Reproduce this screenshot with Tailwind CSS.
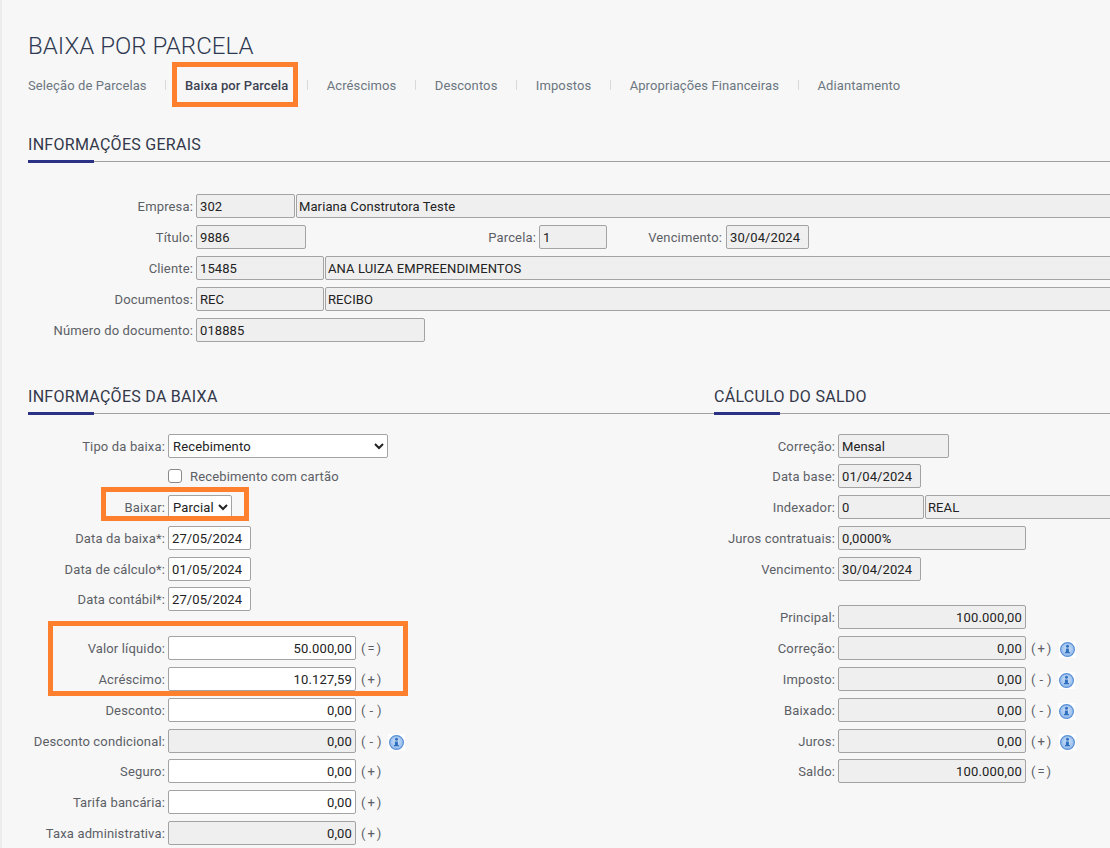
<!DOCTYPE html>
<html lang="pt-BR">
<head>
<meta charset="utf-8">
<script src="https://cdn.jsdelivr.net/npm/@tailwindcss/browser@4"></script>
<title>Baixa por Parcela</title>
</head>
<body class="m-0 bg-[#f7f7f7]">
<div class="relative w-[1110px] h-[848px] overflow-hidden bg-[#f7f7f7] font-['Roboto',sans-serif] text-[13px] leading-none text-[#5c6066] tracking-[0.15px] pl-[28px] border-l-2 border-l-[#ececec] box-border">
  <div class="-ml-[2px]">
    <h1 class="pt-[33px] h-[62px] text-[24px] leading-[26px] font-light tracking-[0.06px] text-[#2f3a52]">BAIXA POR PARCELA</h1>
    <nav class="flex items-center h-[46px] text-[#6b7680] tracking-[0.1px]">
      <span>Seleção de Parcelas</span>
      <span class="w-px h-[10px] bg-[#d9d9d9] mx-[18.7px]"></span>
      <span class="font-medium text-[#3d4252]">Baixa por Parcela</span>
      <span class="w-px h-[10px] bg-[#d9d9d9] mx-[18.7px]"></span>
      <span>Acréscimos</span>
      <span class="w-px h-[10px] bg-[#d9d9d9] mx-[18.7px]"></span>
      <span>Descontos</span>
      <span class="w-px h-[10px] bg-[#d9d9d9] mx-[18.7px]"></span>
      <span>Impostos</span>
      <span class="w-px h-[10px] bg-[#d9d9d9] mx-[18.7px]"></span>
      <span>Apropriações Financeiras</span>
      <span class="w-px h-[10px] bg-[#d9d9d9] mx-[18.7px]"></span>
      <span>Adiantamento</span>
    </nav>

    <section class="mt-[17px]">
      <h2 class="h-[37px] pt-[11px] text-[16px] leading-[18px] tracking-[0.28px] text-[#33384a] font-normal border-b border-b-[#a0a0a0] relative">INFORMAÇÕES GERAIS<span class="absolute left-0 -bottom-[2px] w-[66px] h-[3px] bg-[#2b3184]"></span></h2>
      <div class="mt-[28.5px] flex flex-col">
        <div class="flex items-center h-[31px]">
          <span class="w-[165px] shrink-0 text-right">Empresa:</span>
          <div class="ml-[3px] w-[99px] shrink-0 h-[24px] flex items-center px-[3px] bg-[#efefef] border border-[#a3a3a3] rounded-[2px] text-[#222] tracking-[0.1px]">302</div>
          <div class="ml-[1px] w-[900px] h-[24px] shrink-0 flex items-center px-[2px] bg-[#efefef] border border-[#a3a3a3] rounded-[2px] text-[#222] tracking-[0.1px]">Mariana Construtora Teste</div>
        </div>
        <div class="flex items-center h-[31px]">
          <span class="w-[165px] shrink-0 text-right">Título:</span>
          <div class="ml-[3px] w-[110px] shrink-0 h-[24px] flex items-center px-[3px] bg-[#efefef] border border-[#a3a3a3] rounded-[2px] text-[#222] tracking-[0.1px]">9886</div>
          <span class="w-[230px] shrink-0 text-right">Parcela:</span>
          <div class="ml-[3px] w-[68px] shrink-0 h-[24px] flex items-center px-[3px] bg-[#efefef] border border-[#a3a3a3] rounded-[2px] text-[#222] tracking-[0.1px]">1</div>
          <span class="w-[115px] shrink-0 text-right">Vencimento:</span>
          <div class="ml-[4px] w-[83px] shrink-0 h-[24px] flex items-center px-[3px] bg-[#efefef] border border-[#a3a3a3] rounded-[2px] text-[#222] tracking-[0.1px]">30/04/2024</div>
        </div>
        <div class="flex items-center h-[31px]">
          <span class="w-[165px] shrink-0 text-right">Cliente:</span>
          <div class="ml-[3px] w-[128px] shrink-0 h-[24px] flex items-center px-[3px] bg-[#efefef] border border-[#a3a3a3] rounded-[2px] text-[#222] tracking-[0.1px]">15485</div>
          <div class="ml-[1px] w-[900px] h-[24px] shrink-0 flex items-center px-[2px] bg-[#efefef] border border-[#a3a3a3] rounded-[2px] text-[#222] tracking-[0.1px]">ANA LUIZA EMPREENDIMENTOS</div>
        </div>
        <div class="flex items-center h-[31px]">
          <span class="w-[165px] shrink-0 text-right">Documentos:</span>
          <div class="ml-[3px] w-[128px] shrink-0 h-[24px] flex items-center px-[3px] bg-[#efefef] border border-[#a3a3a3] rounded-[2px] text-[#222] tracking-[0.1px]">REC</div>
          <div class="ml-[1px] w-[900px] h-[24px] shrink-0 flex items-center px-[2px] bg-[#efefef] border border-[#a3a3a3] rounded-[2px] text-[#222] tracking-[0.1px]">RECIBO</div>
        </div>
        <div class="flex items-center h-[31px]">
          <span class="w-[165px] shrink-0 text-right">Número do documento:</span>
          <div class="ml-[3px] w-[229px] shrink-0 h-[24px] flex items-center px-[3px] bg-[#efefef] border border-[#a3a3a3] rounded-[2px] text-[#222] tracking-[0.1px]">018885</div>
        </div>
      </div>
    </section>

    <div class="mt-[31.5px] grid grid-cols-[686px_396px]">
      <section>
        <h2 class="h-[37px] pt-[11px] text-[16px] leading-[18px] tracking-[0.28px] text-[#33384a] font-normal border-b border-b-[#a0a0a0] relative">INFORMAÇÕES DA BAIXA<span class="absolute left-0 -bottom-[2px] w-[66px] h-[3px] bg-[#2b3184]"></span></h2>
        <div class="mt-[16.225px] flex flex-col">
          <div class="flex items-center h-[30.75px]">
            <span class="w-[137px] shrink-0 text-right pt-[1px]">Tipo da baixa:</span>
            <select class="ml-[3px] w-[220px] h-[24px] pt-[1px] bg-white border border-[#a3a3a3] rounded-[2px] text-[13px] text-[#222]"><option>Recebimento</option></select>
          </div>
          <label class="flex items-center h-[30.75px] pl-[140px]">
            <input type="checkbox" class="w-[14px] h-[14px] m-0 appearance-none bg-white border border-[#8a8a8a] rounded-[3px]">
            <span class="ml-[8px]">Recebimento com cartão</span>
          </label>
          <div class="flex items-center h-[30.75px]">
            <span class="w-[137px] shrink-0 text-right">Baixar:</span>
            <select class="ml-[3px] w-[64px] h-[24px] bg-white border border-[#a3a3a3] rounded-[2px] text-[13px] text-[#222]"><option>Parcial</option></select>
          </div>
          <div class="flex items-center h-[30.75px]">
            <span class="w-[137px] shrink-0 text-right pt-[1px]">Data da baixa*:</span>
            <div class="ml-[3px] w-[83px] shrink-0 h-[24px] flex items-center px-[3px] pt-[1px] bg-white border border-[#a3a3a3] rounded-[2px] text-[#222] tracking-[0.1px]">27/05/2024</div>
          </div>
          <div class="flex items-center h-[30.75px]">
            <span class="w-[137px] shrink-0 text-right pt-[1px]">Data de cálculo*:</span>
            <div class="ml-[3px] w-[83px] shrink-0 h-[24px] flex items-center px-[3px] pt-[1px] bg-white border border-[#a3a3a3] rounded-[2px] text-[#222] tracking-[0.1px]">01/05/2024</div>
          </div>
          <div class="flex items-center h-[30.75px]">
            <span class="w-[137px] shrink-0 text-right pt-[1px]">Data contábil*:</span>
            <div class="ml-[3px] w-[83px] shrink-0 h-[24px] flex items-center px-[3px] pt-[1px] bg-white border border-[#a3a3a3] rounded-[2px] text-[#222] tracking-[0.1px]">27/05/2024</div>
          </div>
          <div class="flex items-center h-[30.75px] mt-[18.3px]">
            <span class="w-[137px] shrink-0 text-right">Valor líquido:</span>
            <div class="ml-[3px] w-[188px] shrink-0 h-[24px] flex items-center justify-end px-[3px] bg-white border border-[#a3a3a3] rounded-[2px] text-[#222] tracking-[0.15px]">50.000,00</div>
            <span class="ml-[5px] tracking-[2px]">(=)</span>
          </div>
          <div class="flex items-center h-[30.75px]">
            <span class="w-[137px] shrink-0 text-right">Acréscimo:</span>
            <div class="ml-[3px] w-[188px] shrink-0 h-[24px] flex items-center justify-end px-[3px] bg-white border border-[#a3a3a3] rounded-[2px] text-[#222] tracking-[0.15px]">10.127,59</div>
            <span class="ml-[5px] tracking-[2px]">(+)</span>
          </div>
          <div class="flex items-center h-[30.75px]">
            <span class="w-[137px] shrink-0 text-right pt-[1px]">Desconto:</span>
            <div class="ml-[3px] w-[188px] shrink-0 h-[24px] flex items-center justify-end px-[3px] pt-[1px] bg-white border border-[#a3a3a3] rounded-[2px] text-[#222] tracking-[0.15px]">0,00</div>
            <span class="ml-[5px] pt-[1px] tracking-[0.4px]">( - )</span>
          </div>
          <div class="flex items-center h-[30.75px]">
            <span class="w-[137px] shrink-0 text-right pt-[1px]">Desconto condicional:</span>
            <div class="ml-[3px] w-[188px] shrink-0 h-[24px] flex items-center justify-end px-[3px] pt-[1px] bg-[#efefef] border border-[#a3a3a3] rounded-[2px] text-[#222] tracking-[0.15px]">0,00</div>
            <span class="ml-[5px] pt-[1px] tracking-[0.4px]">( - )</span>
            <svg class="ml-[6px] mt-[3px]" width="17" height="17" viewBox="0 0 17 17"><defs><radialGradient id="ig" cx="50%" cy="45%" r="55%"><stop offset="0%" stop-color="#d3e4f7"/><stop offset="100%" stop-color="#8db7ea"/></radialGradient></defs><rect width="17" height="17" fill="#fff"/><circle cx="8.5" cy="8.5" r="6.9" fill="url(#ig)" stroke="#5a90d8" stroke-width="1.2"/><circle cx="8.5" cy="5.2" r="1.5" fill="#2f6fc0"/><path d="M6.9 7.4h3v3.6h1v1.3H6v-1.3h.9z" fill="#2f6fc0"/></svg>
          </div>
          <div class="flex items-center h-[30.75px]">
            <span class="w-[137px] shrink-0 text-right pt-[1px]">Seguro:</span>
            <div class="ml-[3px] w-[188px] shrink-0 h-[24px] flex items-center justify-end px-[3px] pt-[1px] bg-white border border-[#a3a3a3] rounded-[2px] text-[#222] tracking-[0.15px]">0,00</div>
            <span class="ml-[5px] pt-[1px] tracking-[2px]">(+)</span>
          </div>
          <div class="flex items-center h-[30.75px]">
            <span class="w-[137px] shrink-0 text-right pt-[1px]">Tarifa bancária:</span>
            <div class="ml-[3px] w-[188px] shrink-0 h-[24px] flex items-center justify-end px-[3px] pt-[1px] bg-white border border-[#a3a3a3] rounded-[2px] text-[#222] tracking-[0.15px]">0,00</div>
            <span class="ml-[5px] pt-[1px] tracking-[2px]">(+)</span>
          </div>
          <div class="flex items-center h-[30.75px]">
            <span class="w-[137px] shrink-0 text-right pt-[1px]">Taxa administrativa:</span>
            <div class="ml-[3px] w-[188px] shrink-0 h-[24px] flex items-center justify-end px-[3px] pt-[1px] bg-[#efefef] border border-[#a3a3a3] rounded-[2px] text-[#222] tracking-[0.15px]">0,00</div>
            <span class="ml-[5px] pt-[1px] tracking-[2px]">(+)</span>
          </div>
        </div>
      </section>

      <section>
        <h2 class="h-[37px] pt-[11px] text-[16px] leading-[18px] tracking-[0.28px] text-[#33384a] font-normal border-b border-b-[#a0a0a0] relative">CÁLCULO DO SALDO<span class="absolute left-0 -bottom-[2px] w-[66px] h-[3px] bg-[#2b3184]"></span></h2>
        <div class="mt-[16.225px] flex flex-col">
          <div class="flex items-center h-[30.75px]">
            <span class="w-[121px] shrink-0 text-right pt-[1px]">Correção:</span>
            <div class="ml-[3px] w-[111px] shrink-0 h-[24px] flex items-center px-[3px] pt-[1px] bg-[#efefef] border border-[#a3a3a3] rounded-[2px] text-[#222] tracking-[0.1px]">Mensal</div>
          </div>
          <div class="flex items-center h-[30.75px]">
            <span class="w-[121px] shrink-0 text-right">Data base:</span>
            <div class="ml-[3px] w-[83px] shrink-0 h-[24px] flex items-center px-[3px] bg-[#efefef] border border-[#a3a3a3] rounded-[2px] text-[#222] tracking-[0.1px]">01/04/2024</div>
          </div>
          <div class="flex items-center h-[30.75px]">
            <span class="w-[121px] shrink-0 text-right">Indexador:</span>
            <div class="ml-[3px] w-[86px] shrink-0 h-[24px] flex items-center px-[3px] bg-[#efefef] border border-[#a3a3a3] rounded-[2px] text-[#222] tracking-[0.1px]">0</div>
            <div class="ml-[1px] w-[300px] h-[24px] shrink-0 flex items-center px-[2px] bg-[#efefef] border border-[#a3a3a3] rounded-[2px] text-[#222] tracking-[0.1px]">REAL</div>
          </div>
          <div class="flex items-center h-[30.75px]">
            <span class="w-[121px] shrink-0 text-right pt-[1px]">Juros contratuais:</span>
            <div class="ml-[3px] w-[188px] shrink-0 h-[24px] flex items-center px-[3px] pt-[1px] bg-[#efefef] border border-[#a3a3a3] rounded-[2px] text-[#222] tracking-[0.1px]">0,0000%</div>
          </div>
          <div class="flex items-center h-[30.75px]">
            <span class="w-[121px] shrink-0 text-right pt-[1px]">Vencimento:</span>
            <div class="ml-[3px] w-[83px] shrink-0 h-[24px] flex items-center px-[3px] pt-[1px] bg-[#efefef] border border-[#a3a3a3] rounded-[2px] text-[#222] tracking-[0.1px]">30/04/2024</div>
          </div>
          <div class="flex items-center h-[30.75px] mt-[17.9px]">
            <span class="w-[121px] shrink-0 text-right">Principal:</span>
            <div class="ml-[3px] w-[188px] shrink-0 h-[24px] flex items-center justify-end px-[3px] bg-[#efefef] border border-[#a3a3a3] rounded-[2px] text-[#222] tracking-[0.15px]">100.000,00</div>
          </div>
          <div class="flex items-center h-[30.75px] mt-[0.4px]">
            <span class="w-[121px] shrink-0 text-right">Correção:</span>
            <div class="ml-[3px] w-[188px] shrink-0 h-[24px] flex items-center justify-end px-[3px] bg-[#efefef] border border-[#a3a3a3] rounded-[2px] text-[#222] tracking-[0.15px]">0,00</div>
            <span class="ml-[5px] tracking-[2px]">(+)</span>
            <svg class="ml-[6px] mt-[3px]" width="17" height="17" viewBox="0 0 17 17"><rect width="17" height="17" fill="#fff"/><circle cx="8.5" cy="8.5" r="6.9" fill="url(#ig)" stroke="#5a90d8" stroke-width="1.2"/><circle cx="8.5" cy="5.2" r="1.5" fill="#2f6fc0"/><path d="M6.9 7.4h3v3.6h1v1.3H6v-1.3h.9z" fill="#2f6fc0"/></svg>
          </div>
          <div class="flex items-center h-[30.75px]">
            <span class="w-[121px] shrink-0 text-right">Imposto:</span>
            <div class="ml-[3px] w-[188px] shrink-0 h-[24px] flex items-center justify-end px-[3px] bg-[#efefef] border border-[#a3a3a3] rounded-[2px] text-[#222] tracking-[0.15px]">0,00</div>
            <span class="ml-[5px] tracking-[0.4px]">( - )</span>
            <svg class="ml-[6px] mt-[3px]" width="17" height="17" viewBox="0 0 17 17"><rect width="17" height="17" fill="#fff"/><circle cx="8.5" cy="8.5" r="6.9" fill="url(#ig)" stroke="#5a90d8" stroke-width="1.2"/><circle cx="8.5" cy="5.2" r="1.5" fill="#2f6fc0"/><path d="M6.9 7.4h3v3.6h1v1.3H6v-1.3h.9z" fill="#2f6fc0"/></svg>
          </div>
          <div class="flex items-center h-[30.75px]">
            <span class="w-[121px] shrink-0 text-right pt-[1px]">Baixado:</span>
            <div class="ml-[3px] w-[188px] shrink-0 h-[24px] flex items-center justify-end px-[3px] pt-[1px] bg-[#efefef] border border-[#a3a3a3] rounded-[2px] text-[#222] tracking-[0.15px]">0,00</div>
            <span class="ml-[5px] pt-[1px] tracking-[0.4px]">( - )</span>
            <svg class="ml-[6px] mt-[3px]" width="17" height="17" viewBox="0 0 17 17"><rect width="17" height="17" fill="#fff"/><circle cx="8.5" cy="8.5" r="6.9" fill="url(#ig)" stroke="#5a90d8" stroke-width="1.2"/><circle cx="8.5" cy="5.2" r="1.5" fill="#2f6fc0"/><path d="M6.9 7.4h3v3.6h1v1.3H6v-1.3h.9z" fill="#2f6fc0"/></svg>
          </div>
          <div class="flex items-center h-[30.75px]">
            <span class="w-[121px] shrink-0 text-right pt-[1px]">Juros:</span>
            <div class="ml-[3px] w-[188px] shrink-0 h-[24px] flex items-center justify-end px-[3px] pt-[1px] bg-[#efefef] border border-[#a3a3a3] rounded-[2px] text-[#222] tracking-[0.15px]">0,00</div>
            <span class="ml-[5px] pt-[1px] tracking-[2px]">(+)</span>
            <svg class="ml-[6px] mt-[3px]" width="17" height="17" viewBox="0 0 17 17"><rect width="17" height="17" fill="#fff"/><circle cx="8.5" cy="8.5" r="6.9" fill="url(#ig)" stroke="#5a90d8" stroke-width="1.2"/><circle cx="8.5" cy="5.2" r="1.5" fill="#2f6fc0"/><path d="M6.9 7.4h3v3.6h1v1.3H6v-1.3h.9z" fill="#2f6fc0"/></svg>
          </div>
          <div class="flex items-center h-[30.75px]">
            <span class="w-[121px] shrink-0 text-right pt-[1px]">Saldo:</span>
            <div class="ml-[3px] w-[188px] shrink-0 h-[24px] flex items-center justify-end px-[3px] pt-[1px] bg-[#efefef] border border-[#a3a3a3] rounded-[2px] text-[#222] tracking-[0.15px]">100.000,00</div>
            <span class="ml-[5px] pt-[1px] tracking-[2px]">(=)</span>
          </div>
        </div>
      </section>
    </div>
  </div>

  <div class="absolute left-[170px] top-[62px] w-[126px] h-[45px] border-[5px] border-[#fe7f2d]"></div>
  <div class="absolute left-[99px] top-[487px] w-[148px] h-[34px] border-[5px] border-[#fe7f2d]"></div>
  <div class="absolute left-[46px] top-[621px] w-[360px] h-[75px] border-[5px] border-[#fe7f2d]"></div>
</div>
</body>
</html>
